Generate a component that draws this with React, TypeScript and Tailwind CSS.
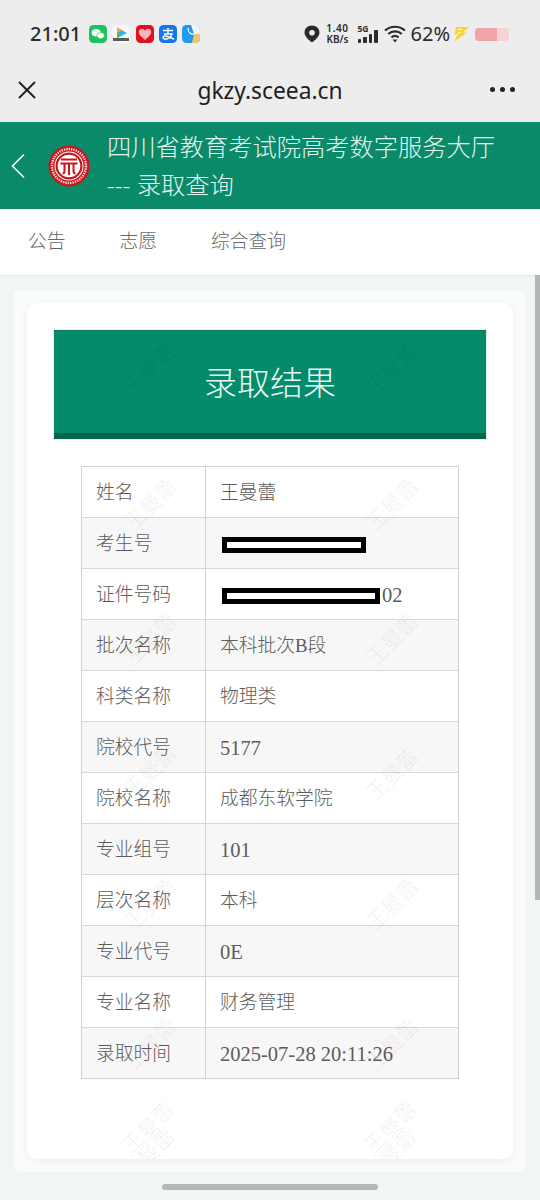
import React from 'react';
import { X } from 'lucide-react';

const rows = [
  ['姓名', '王曼蕾'],
  ['考生号', ''],
  ['证件号码', '02'],
  ['批次名称', '本科批次B段'],
  ['科类名称', '物理类'],
  ['院校代号', '5177'],
  ['院校名称', '成都东软学院'],
  ['专业组号', '101'],
  ['层次名称', '本科'],
  ['专业代号', '0E'],
  ['专业名称', '财务管理'],
  ['录取时间', '2025-07-28 20:11:26'],
];

// watermark centres, page coordinates
const marks = [
  [150, 370], [393, 370],
  [151, 505], [393, 505],
  [151, 640], [393, 640],
  [151, 772], [393, 775],
  [151, 905], [393, 905],
  [151, 1045], [393, 1045],
  [149, 1128], [391, 1128],
  [149, 1155], [391, 1155],
];

const AppIcons = () => (
  <div className="flex items-center gap-[5.2px] ml-[8px]">
    <svg width="18" height="18" viewBox="0 0 18 18">
      <rect width="18" height="18" rx="4.5" fill="#1fc15f" />
      <ellipse cx="7.2" cy="7.8" rx="4.6" ry="3.8" fill="#fff" />
      <ellipse cx="11.6" cy="10.6" rx="3.8" ry="3.1" fill="#fff" stroke="#1fc15f" strokeWidth="0.7" />
    </svg>
    <svg width="18" height="18" viewBox="0 0 18 18">
      <rect width="18" height="18" rx="4.5" fill="#f7f7f7" />
      <path d="M5 2.5 L15 8 L5 13 Z" fill="#2fb4ea" />
      <path d="M5 2.5 L10 5.5 L5 8 Z" fill="#f6a723" />
      <path d="M5 8 L10 10.5 L5 13 Z" fill="#5cc04a" />
      <rect x="1" y="13" width="16" height="3" fill="#5a5a5a" />
    </svg>
    <svg width="18" height="18" viewBox="0 0 18 18">
      <rect width="18" height="18" rx="4.5" fill="#e3101e" />
      <path d="M9 15 C4 11 2.8 9 2.8 6.8 C2.8 4.8 4.4 3.8 5.8 3.8 C7.2 3.8 8.4 4.6 9 5.8 C9.6 4.6 10.8 3.8 12.2 3.8 C13.6 3.8 15.2 4.8 15.2 6.8 C15.2 9 14 11 9 15 Z" fill="#f7b4ba" />
    </svg>
    <svg width="18" height="18" viewBox="0 0 18 18">
      <rect width="18" height="18" rx="4.5" fill="#1677e8" />
      <path d="M4 5.5 H14 M9 3 V9 M5 9 H13 C12 12 9 14.5 5.5 14 C3.5 13.5 3.5 11 6 11 C8.5 11 11.5 12.5 15 14.2" fill="none" stroke="#fff" strokeWidth="1.5" />
    </svg>
    <svg width="18" height="18" viewBox="0 0 18 18">
      <rect width="18" height="18" rx="4.5" fill="#1e9bf0" />
      <path d="M9 0 H13.5 A4.5 4.5 0 0 1 18 4.5 V9 H12 Z" fill="#f2f6fa" />
      <path d="M12 9 H18 V13.5 A4.5 4.5 0 0 1 13.5 18 H10 Z" fill="#f3c56d" />
      <path d="M6 3 C6 8 9 9.5 12 9" fill="none" stroke="#fff" strokeWidth="1.2" />
    </svg>
  </div>
);

const StatusRight = () => (
  <div className="flex items-center">
    <svg width="16" height="18" viewBox="0 0 16 18">
      <path fillRule="evenodd" d="M8 0.5 C3.6 0.5 0.5 3.6 0.5 7.6 C0.5 11.5 5 15.5 8 17.5 C11 15.5 15.5 11.5 15.5 7.6 C15.5 3.6 12.4 0.5 8 0.5 Z M8 5 A2.8 2.8 0 1 1 8 10.6 A2.8 2.8 0 1 1 8 5 Z" fill="#2b2b2b" />
    </svg>
    <div className="ml-[6px] w-[24px] flex flex-col items-center text-[10px] leading-[11px] font-semibold text-[#2b2b2b]">
      <span className="tracking-[0.6px]">1.40</span>
      <span>KB/s</span>
    </div>
    <div className="ml-[8px] relative w-[21px] h-[18px]">
      <span className="absolute left-0 top-0 text-[8.5px] leading-[8px] font-bold text-[#2b2b2b]">5G</span>
      <div className="absolute left-0 bottom-0 flex items-end gap-[2px]">
        <div className="w-[3.5px] h-[4px] rounded-[1px] bg-[#2b2b2b]" />
        <div className="w-[3.5px] h-[6px] rounded-[1px] bg-[#2b2b2b]" />
        <div className="w-[3.5px] h-[9px] rounded-[1px] bg-[#2b2b2b]" />
        <div className="w-[3.5px] h-[13px] rounded-[1px] bg-[#2b2b2b]" />
      </div>
    </div>
    <svg width="22" height="18" viewBox="0 0 22 18" className="ml-[5px]">
      <path d="M1 5.5 C7 0.5 15 0.5 21 5.5 M4.2 9 C8.2 5.6 13.8 5.6 17.8 9 M7.4 12.3 C9.6 10.6 12.4 10.6 14.6 12.3" fill="none" stroke="#2b2b2b" strokeWidth="2.2" />
      <path d="M8.6 14.6 L13.4 14.6 L11 17.5 Z" fill="#2b2b2b" />
    </svg>
    <span className="ml-[5px] text-[20px] leading-none text-[#2b2b2b]">62%</span>
    <svg width="17" height="16" viewBox="0 0 17 16" className="ml-[3px]">
      <path d="M3 1 H16 L10 6.5 H14 L1 15.5 L5 8.5 H1.5 Z" fill="#f6d433" />
      <path d="M5 4 L9 3 M4 8 L8 6" stroke="#fff" strokeWidth="1" />
    </svg>
    <div className="ml-[5px] w-[34px] h-[13px] rounded-[4px] bg-[#f5d3d5] overflow-hidden">
      <div className="w-[22px] h-full bg-[#f0a5aa]" />
    </div>
  </div>
);

const Logo = () => (
  <svg width="42" height="42" viewBox="0 0 42 42">
    <circle cx="21" cy="21" r="20.5" fill="#c9161d" />
    <circle cx="21" cy="21" r="17" fill="none" stroke="#f6d9d5" strokeWidth="2.4" strokeDasharray="1.4 1" />
    <circle cx="21" cy="21" r="14.5" fill="#fff" />
    <circle cx="21" cy="21" r="12.4" fill="none" stroke="#c9161d" strokeWidth="2.2" />
    <path d="M13 14.5 H29 M12.5 18.5 H29.5 M16.5 18.5 V26 C16.5 28 15.5 28.5 14.5 28.5 M21 18.5 V30 M25.5 18.5 V26 C25.5 28 26.5 28.5 27.5 28.5" fill="none" stroke="#c9161d" strokeWidth="2" />
  </svg>
);

const Redacted = ({ w }: { w: string }) => (
  <div className={`${w} ml-[2px] mr-[2px] h-[16px] border-[5px] border-black bg-white`} />
);

export default function App() {
  return (
    <div className="relative w-[540px] h-[1200px] overflow-hidden bg-[#f2f5f5] font-['Noto_Sans','Noto_Sans_CJK_SC',sans-serif]">
      {/* phone status bar + webview title */}
      <div className="bg-[#ededed] h-[122px]">
        <div className="h-[68px] pl-[30px] pr-[31px] flex items-center justify-between">
          <div className="flex items-center">
            <span className="text-[20px] leading-none font-medium text-[#2b2b2b]">21:01</span>
            <AppIcons />
          </div>
          <StatusRight />
        </div>
        <div className="h-[44px] relative flex items-center justify-center">
          <X className="absolute left-[12px] top-[7px] w-[30px] h-[30px] text-[#222]" strokeWidth={1.5} />
          <span className="text-[22.8px] leading-none pt-[2px] text-[#1f1f1f]">gkzy.sceea.cn</span>
          <div className="absolute right-[25px] top-[19px] flex gap-[5px]">
            <div className="w-[5px] h-[5px] rounded-full bg-[#222]" />
            <div className="w-[5px] h-[5px] rounded-full bg-[#222]" />
            <div className="w-[5px] h-[5px] rounded-full bg-[#222]" />
          </div>
        </div>
      </div>

      {/* green site header */}
      <div className="h-[87px] bg-[#0b8a69] flex items-center">
        <svg width="14" height="26" viewBox="0 0 14 26" className="ml-[11px]">
          <path d="M13 1.5 L1.5 13 L13 24.5" fill="none" stroke="#fff" strokeWidth="1.6" />
        </svg>
        <div className="ml-[23px]">
          <Logo />
        </div>
        <div className="ml-[17px] text-[24.25px] leading-[38px] text-[#e4f4ee] font-light">
          <div>四川省教育考试院高考数字服务大厅</div>
          <div>--- 录取查询</div>
        </div>
      </div>

      {/* nav */}
      <div className="h-[67px] bg-white border-b border-[#e3e5e5] flex items-center pl-[28px] pb-[2px] text-[18.75px] font-light text-[#666]">
        <span>公告</span>
        <span className="ml-[54px]">志愿</span>
        <span className="ml-[54px]">综合查询</span>
      </div>

      {/* panel + card */}
      <div className="mt-[14px] mx-[14px] p-[13px] h-[882px] rounded-[6px] bg-[#fafbfb]">
        <div className="h-[856px] rounded-[10px] bg-white shadow-[0_2px_8px_rgba(0,0,0,0.06)] pt-[27px] px-[27px]">
          <div className="h-[109px] bg-[#038b6b] border-t border-[#07795d] border-b-[6px] border-b-[#05664f] shadow-[0_0_1px_rgba(0,0,0,0.4)] flex items-center justify-center">
            <span className="text-[33px] leading-none text-[#eaf7f2] font-light">录取结果</span>
          </div>
          <div className="mt-[27px] mx-[27px] border border-[#d2d2d2] font-['Liberation_Serif','Noto_Sans_CJK_SC',serif] text-[18.75px] font-light text-[#5c5c5c]">
            {rows.map((row, i) => (
              <div
                key={row[0]}
                className={`flex ${i > 0 ? 'h-[51px] border-t border-[#d8d8d8]' : 'h-[50px]'} ${i % 2 === 1 ? 'bg-[#f7f7f7]' : 'bg-white'}`}
              >
                <div className="w-[124px] pl-[14px] pt-[3px] border-r border-[#d2d2d2] flex items-center">{row[0]}</div>
                <div className="flex-1 pl-[14px] pt-[3px] flex items-center">
                  {row[0] === '考生号' && <Redacted w="w-[144px]" />}
                  {row[0] === '证件号码' && <Redacted w="w-[158px]" />}
                  {/^[0-9]/.test(row[1]) ? <span className="text-[20.5px]">{row[1]}</span> : <span>{row[1]}</span>}
                </div>
              </div>
            ))}
          </div>
        </div>
      </div>

      {/* watermark, stops at the card's bottom edge */}
      <div className="absolute left-0 top-0 w-[540px] h-[1159px] overflow-hidden pointer-events-none">
        {marks.map(([x, y]) => (
          <div
            key={`${x}-${y}`}
            className="absolute -rotate-45 -translate-x-1/2 -translate-y-1/2 font-['Liberation_Serif','Noto_Sans_CJK_SC',serif] text-[21px] leading-none whitespace-nowrap text-black/[0.08] font-light"
            style={{ left: x, top: y }}
          >
            王曼蕾
          </div>
        ))}
      </div>

      {/* scrollbar */}
      <div className="absolute right-0 top-[275px] w-[5px] h-[625px] bg-[#b3b7b7]" />

      {/* gesture bar */}
      <div className="absolute left-[162px] top-[1184px] w-[216px] h-[6px] rounded-full bg-[#b5b8b8]" />
    </div>
  );
}
